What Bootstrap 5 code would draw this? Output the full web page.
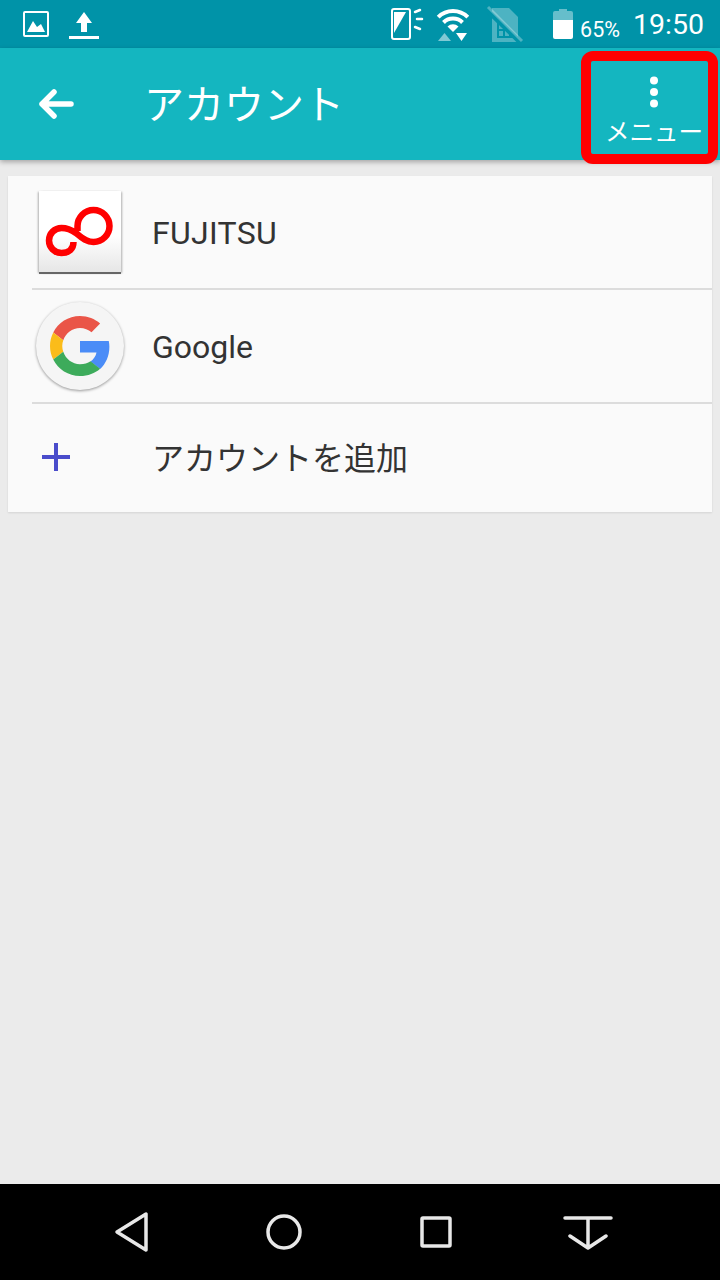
<!DOCTYPE html>
<html lang="ja">
<head>
    <meta charset="UTF-8">
    <meta name="viewport" content="width=device-width, initial-scale=1.0">
    <title>アカウント</title>
    <link href="https://cdn.jsdelivr.net/npm/bootstrap@5.3.2/dist/css/bootstrap.min.css" rel="stylesheet">
    <style>
        html, body { height: 100%; }
        body { background: #ebebeb; font-family: Roboto, "Noto Sans CJK JP", sans-serif; color: #333; }
        .phone-screen { width: 720px; height: 1280px; overflow: hidden; }
        .status-strip { height: 48px; background: #0093a8; color: #fff; padding: 0 16px 0 23px; }
        .status-strip svg { display: block; flex: none; }
        .upload-icon { margin-left: 17px; }
        .wifi-icon { margin-left: 12px; }
        .sim-icon { margin-left: 16px; }
        .battery-icon { margin-left: 29px; }
        .clock-text { font-size: 28.500px; line-height: 1; margin-left: 13px; margin-top: 2px; }
        .pct-text { font-size: 21.500px; line-height: 1; margin-left: 7px; margin-top: 11px; }
        .title-bar { height: 112px; background: #14b6c0; color: #fff; box-shadow: 0 2px 5px rgba(0,0,0,.3); padding-left: 38px; }
        .title-text { font-size: 40px; line-height: 1; margin-left: 70px; margin-top: 4px; font-weight: 400; }
        .menu-box { width: 137px; height: 113px; margin: 3px 2px 0 0; border: 10px solid #f00; border-radius: 12px; color: #fff; padding: 15px 0 0 9px; }
        .menu-label { font-size: 24.500px; line-height: 1; margin-top: 13px; white-space: nowrap; }
        .account-panel { margin: 16px 8px 0; background: #fafafa; box-shadow: 0 1px 2px rgba(0,0,0,.1); }
        .account-row { height: 114px; margin-left: 24px; border-bottom: 2px solid #dcdcdc; }
        .account-row.last-row { height: 108px; border-bottom: 0; }
        .icon-slot { width: 96px; flex: none; }
        .row-label { font-size: 32px; line-height: 1; margin-left: 24px; margin-top: 2px; color: #333; }
        .caps-label { letter-spacing: .3px; }
        .fj-tile { width: 82px; height: 83px; margin-left: 7px; background: linear-gradient(#fff 55%, #e6e6e6); border-bottom: 2px solid #666; box-shadow: 2px 0 2px -1px rgba(0,0,0,.3), -2px 0 2px -1px rgba(0,0,0,.3); }
        .g-disc { width: 88px; height: 88px; margin-left: 4px; border-radius: 50%; background: #f5f5f5; box-shadow: 0 1px 3px rgba(0,0,0,.4); }
        .g-mark { margin-right: 1px; }
        .plus-icon { display: block; margin: 0 0 2px 10px; }
        .nav-strip { height: 96px; background: #000; padding-left: 113px; }
        .nav-strip svg { display: block; flex: none; }
        .nav-home { margin-left: 117px; }
        .nav-recent { margin-left: 118px; }
        .nav-hide { margin-left: 111px; }
    </style>
</head>
<body>
    <div class="phone-screen d-flex flex-column">
        <div class="status-strip d-flex align-items-center">
            <svg width="28" height="28" viewBox="0 0 28 28" fill="none"><rect x="1" y="2" width="24" height="24" rx="1" stroke="#fff" stroke-width="2"/><path d="M4 22l6-11 4 6 4-3 4 8z" fill="#fff"/></svg>
            <svg class="upload-icon" width="32" height="30" viewBox="0 0 32 30" fill="#fff"><path d="M16 3l8 11h-5v9h-6v-9H8z"/><rect x="1" y="27" width="30" height="3"/></svg>
            <div class="ms-auto d-flex align-items-center">
                <svg width="34" height="34" viewBox="0 0 34 34" fill="none"><rect x="2" y="2" width="18" height="30" rx="2" stroke="#fff" stroke-width="2"/><path d="M4 5h12L4 26z" fill="#fff"/><path d="M25 5l5-2M27 12h5M25 20l5 2" stroke="#fff" stroke-width="2.500" stroke-linecap="round"/></svg>
                <svg class="wifi-icon" width="34" height="36" viewBox="0 0 34 36" fill="none"><path d="M2.200 11.200a21 21 0 0 1 29.600 0M7.500 16.500a13.500 13.500 0 0 1 19 0" stroke="#fff" stroke-width="4"/><path d="M17 26l-5.500-5.500a8 8 0 0 1 11 0z" fill="#fff"/><path d="M2 35l6.500-8 6.500 8z" fill="#fff" opacity=".5"/><path d="M20 27h11l-5.500 8z" fill="#fff"/></svg>
                <svg class="sim-icon" width="38" height="40" viewBox="0 0 38 40" fill="none"><path d="M6 4h17l9 9v25H6z" fill="#fff" opacity=".3"/><path d="M12 19v14h16M12 26h10M18 26v7M24 30v3" stroke="#0093a8" stroke-width="2"/><path d="M1 6l34 33" stroke="#0093a8" stroke-width="5"/><path d="M2 3l34 34" stroke="#fff" stroke-width="3" opacity=".3"/></svg>
                <svg class="battery-icon" width="20" height="30" viewBox="0 0 20 30" fill="#fff"><path d="M6 0h8v2h4a2 2 0 0 1 2 2v7H0V4a2 2 0 0 1 2-2h4z" opacity=".4"/><path d="M0 11h20v17a2 2 0 0 1-2 2H2a2 2 0 0 1-2-2z"/></svg>
                <span class="pct-text">65%</span>
                <span class="clock-text">19:50</span>
            </div>
        </div>
        <div class="title-bar d-flex align-items-center position-relative">
            <svg width="36" height="32" viewBox="0 0 36 32" fill="none" stroke="#fff" stroke-width="5.500" stroke-linecap="round" stroke-linejoin="round"><path d="M33 16H4M16 4L4 16l12 12"/></svg>
            <span class="title-text">アカウント</span>
            <div class="menu-box ms-auto align-self-start d-flex flex-column align-items-center">
                <svg width="12" height="32" viewBox="0 0 12 32" fill="#fff"><circle cx="6" cy="4.500" r="4"/><circle cx="6" cy="16" r="4"/><circle cx="6" cy="27.500" r="4"/></svg>
                <span class="menu-label">メニュー</span>
            </div>
        </div>
        <div class="flex-grow-1">
            <div class="account-panel">
                <div class="account-row d-flex align-items-center">
                    <div class="icon-slot"><div class="fj-tile d-flex align-items-center justify-content-center">
                        <svg width="70" height="55" viewBox="45 205 70 55" fill="none" stroke="#f00" stroke-width="6.500"><path d="M77.500 232V227A16 16 0 1 1 93.500 243C85.500 243 81 238 76 234C71 230.500 67 229 61.500 229A12.500 12.500 0 1 0 61.500 254C69 254 73.500 250 73.500 243"/></svg>
                    </div></div>
                    <span class="row-label caps-label">FUJITSU</span>
                </div>
                <div class="account-row d-flex align-items-center">
                    <div class="icon-slot"><div class="g-disc d-flex align-items-center justify-content-center">
                        <svg class="g-mark" width="60" height="60" viewBox="0 0 48 48"><path fill="#ea5548" d="M24 9.500c3.500 0 6.700 1.300 9.200 3.400l6.900-6.900C35.900 2.300 30.300 0 24 0 14.600 0 6.500 5.400 2.600 13.200l8 6.200C12.500 13.600 17.800 9.500 24 9.500z"/><path fill="#4a8cf7" d="M47.500 24.500c0-1.600-.2-3.100-.5-4.500H24v9.100h13.200c-.6 3-2.300 5.500-4.800 7.200l7.700 6c4.500-4.200 7.400-10.300 7.400-17.800z"/><path fill="#fbbc1a" d="M10.600 28.600c-.5-1.400-.8-3-.8-4.600s.3-3.200.8-4.600l-8-6.200C.9 16.500 0 20.100 0 24s.9 7.500 2.600 10.800z"/><path fill="#3dab5b" d="M24 48c6.500 0 11.900-2.100 16.100-5.800l-7.700-6c-2.200 1.500-5 2.300-8.400 2.300-6.200 0-11.500-4.100-13.400-9.900l-8 6.200C6.500 42.600 14.600 48 24 48z"/></svg>
                    </div></div>
                    <span class="row-label">Google</span>
                </div>
                <div class="account-row last-row d-flex align-items-center">
                    <div class="icon-slot">
                        <svg class="plus-icon" width="28" height="28" viewBox="0 0 28 28" fill="#4a4ccb"><rect x="0" y="12" width="28" height="4"/><rect x="12" y="0" width="4" height="28"/></svg>
                    </div>
                    <span class="row-label">アカウントを追加</span>
                </div>
            </div>
        </div>
        <div class="nav-strip d-flex align-items-center">
            <svg width="36" height="44" viewBox="0 0 36 44" fill="none" stroke="#e8e8e8" stroke-width="3.500" stroke-linejoin="round"><path d="M33 4v36L4 22z"/></svg>
            <svg class="nav-home" width="36" height="36" viewBox="0 0 36 36" fill="none" stroke="#e8e8e8" stroke-width="3.500"><circle cx="18" cy="18" r="16"/></svg>
            <svg class="nav-recent" width="32" height="32" viewBox="0 0 32 32" fill="none" stroke="#e8e8e8" stroke-width="3.500" stroke-linejoin="round"><rect x="2" y="2" width="28" height="28" rx="1"/></svg>
            <svg class="nav-hide" width="50" height="36" viewBox="0 0 50 36" fill="none" stroke="#e8e8e8" stroke-width="3.500" stroke-linecap="round" stroke-linejoin="round"><path d="M2 4h46M25 4v30M7 22l18 12 18-12"/></svg>
        </div>
    </div>
    <script src="https://cdn.jsdelivr.net/npm/bootstrap@5.3.2/dist/js/bootstrap.bundle.min.js"></script>
</body>
</html>
